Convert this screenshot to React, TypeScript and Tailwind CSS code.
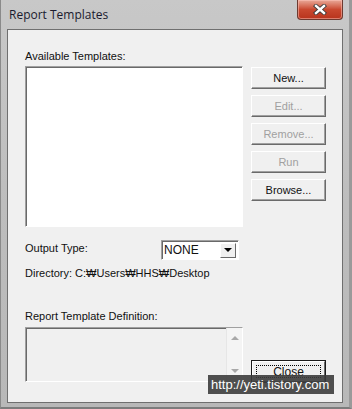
import { ReactNode } from "react";

const font = { fontFamily: '"Liberation Sans", Arial, sans-serif' };

function Btn({ children, disabled }: { children: ReactNode; disabled?: boolean }) {
  return (
    <div
      className={[
        "w-[75px] h-[22px] flex items-center justify-center text-[11px] bg-[#f0f0f0]",
        "border border-t-white border-l-white border-b-[#6a6a6a] border-r-[#6a6a6a]",
        "shadow-[inset_-1px_-1px_0_#a0a0a0]",
        disabled ? "text-[#a0a0a0]" : "text-[#111]",
      ].join(" ")}
    >
      {children}
    </div>
  );
}

function Sunken({ className, children }: { className: string; children?: ReactNode }) {
  return (
    <div
      className={[
        "border border-t-[#a0a0a0] border-l-[#a0a0a0] border-b-white border-r-white",
        "shadow-[inset_1px_1px_0_#696969]",
        className,
      ].join(" ")}
    >
      {children}
    </div>
  );
}

function CloseX() {
  return (
    <svg width="14" height="11" viewBox="0 0 14 11">
      <path d="M3 2 L11 9 M11 2 L3 9" stroke="#3a3a3a" strokeWidth="4.2" strokeLinecap="square" />
      <path d="M3 2 L11 9 M11 2 L3 9" stroke="#ffffff" strokeWidth="2.4" strokeLinecap="square" />
    </svg>
  );
}

export default function App() {
  return (
    <div
      className="relative w-[352px] h-[409px] overflow-hidden bg-gradient-to-b from-[#c8c8c8] via-[#bdbdbd] to-[#b8b8b8] border-l border-l-[#8a8a8a] border-r-[3px] border-r-[#9a9a9a] border-b-2 border-b-[#7c7c7c]"
      style={font}
    >
      {/* title bar */}
      <div className="h-[29px] flex justify-between items-start pl-[8px] pr-[6px]">
        <div className="pt-[6px] text-[12px] text-[#1b1b2e]" style={{ fontFamily: '"Open Sans", "Liberation Sans", sans-serif' }}>
          Report Templates
        </div>
        <div className="w-[46px] h-[20px] flex items-center justify-center rounded-b-[4px] border border-t-0 border-[#6d3a30] bg-gradient-to-b from-[#e8a898] via-[#c9482f] to-[#b8331c] shadow-[inset_0_0_0_1px_rgba(255,200,190,0.5)]">
          <CloseX />
        </div>
      </div>

      {/* client area */}
      <div className="mx-[6px] h-[374px] border border-[#6f6f6f] bg-[#f0f0f0] text-[11px] text-[#111] pl-[17px]">
        <div className="mt-[20px] leading-[13px]">Available Templates:</div>
        <div className="flex gap-[8px] mt-[3px]">
          <Sunken className="w-[218px] h-[161px] bg-white" />
          <div className="flex flex-col gap-[6px] mt-[1px]">
            <Btn>New...</Btn>
            <Btn disabled>Edit...</Btn>
            <Btn disabled>Remove...</Btn>
            <Btn disabled>Run</Btn>
            <Btn>Browse...</Btn>
          </div>
        </div>

        <div className="flex items-start mt-[13px]">
          <div className="w-[136px] pt-[2px] leading-[13px]">Output Type:</div>
          <Sunken className="w-[78px] h-[20px] bg-white flex items-center justify-between pl-[2px] pr-[2px]">
            <span className="text-[12px]">NONE</span>
            <div className="w-[16px] h-[15px] flex items-center justify-center bg-[#f0f0f0] border border-t-white border-l-white border-b-[#6a6a6a] border-r-[#6a6a6a]">
              <div className="w-0 h-0 border-l-[4px] border-r-[4px] border-t-[4px] border-l-transparent border-r-transparent border-t-black" />
            </div>
          </Sunken>
        </div>

        <div className="mt-[7px] leading-[13px]">Directory: C:₩Users₩HHS₩Desktop</div>

        <div className="mt-[30px] leading-[13px]">Report Template Definition:</div>
        <div className="flex items-end gap-[8px] mt-[4px]">
          <Sunken className="w-[218px] h-[55px] bg-[#f0f0f0] flex justify-end">
            <div className="w-[16px] h-full border-l border-l-[#e6e6e6] bg-[#f4f4f4] flex flex-col items-center justify-between py-[8px]">
              <div className="w-0 h-0 border-l-[4px] border-r-[4px] border-b-[4px] border-l-transparent border-r-transparent border-b-[#a8a8a8]" />
              <div className="w-0 h-0 border-l-[4px] border-r-[4px] border-t-[4px] border-l-transparent border-r-transparent border-t-[#a8a8a8]" />
            </div>
          </Sunken>
          <div className="border border-[#1a1a1a] mb-[-1px]">
            <div className="w-[73px] h-[21px] p-[3px] bg-[#f0f0f0] border border-t-white border-l-white border-b-[#6a6a6a] border-r-[#6a6a6a]">
              <div className="w-full h-full border border-dotted border-black flex items-center justify-center text-[12px]">
                Close
              </div>
            </div>
          </div>
        </div>
      </div>

      {/* watermark */}
      <div className="absolute left-[207px] top-[375px] w-[126px] h-[19px] bg-[#3c3c3c]/90 text-white text-[13px] flex items-center pl-[3px] leading-none">
        http://yeti.tistory.com
      </div>
    </div>
  );
}
